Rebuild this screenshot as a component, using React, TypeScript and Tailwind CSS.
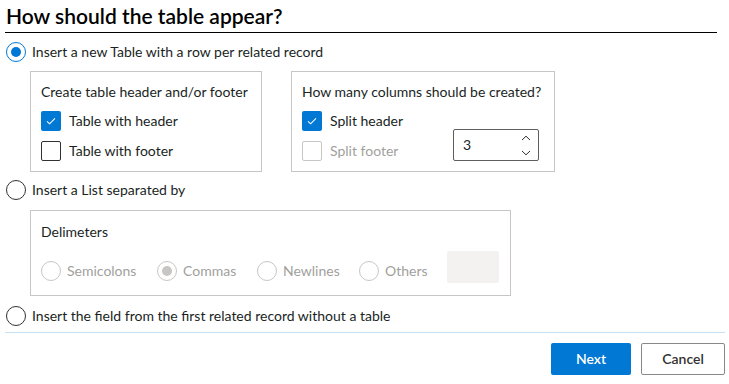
import React from 'react';

function Check({ checked, disabled, label }: { checked?: boolean; disabled?: boolean; label: string }) {
  return (
    <div className="flex items-center h-[20px]">
      {checked ? (
        <span className="w-[20px] h-[20px] rounded-[2px] bg-[#0078d4] flex items-center justify-center">
          <svg width="12" height="12" viewBox="0 0 12 12" fill="none">
            <path d="M2 6.3 L4.6 8.8 L10 3.4" stroke="#ffffff" strokeWidth="1.1" />
          </svg>
        </span>
      ) : (
        <span
          className={
            disabled
              ? 'w-[20px] h-[20px] rounded-[2px] border border-[#c8c6c4] bg-white'
              : 'w-[20px] h-[20px] rounded-[2px] border border-[#323130] bg-white'
          }
        />
      )}
      <span className={disabled ? 'ml-[8px] text-[#a19f9d] whitespace-nowrap' : 'ml-[8px] text-[#201f1e] whitespace-nowrap'}>{label}</span>
    </div>
  );
}

function Radio({ checked, disabled, label }: { checked?: boolean; disabled?: boolean; label: string }) {
  const ring = disabled ? 'border-[#c8c6c4]' : checked ? 'border-[#0078d4]' : 'border-[#323130]';
  return (
    <div className="flex items-center h-[20px]">
      <span className={`w-[20px] h-[20px] rounded-full border ${ring} bg-white flex items-center justify-center shrink-0`}>
        {checked && (
          <span className={disabled ? 'w-[10px] h-[10px] rounded-full bg-[#c8c6c4]' : 'w-[10px] h-[10px] rounded-full bg-[#0078d4]'} />
        )}
      </span>
      <span className={disabled ? 'ml-[6px] text-[#a19f9d] whitespace-nowrap' : 'ml-[6px] text-[#201f1e] whitespace-nowrap'}>{label}</span>
    </div>
  );
}

export default function App() {
  return (
    <div className="bg-white w-[729px] h-[384px] pl-[5px] text-[14px] leading-[20px] text-[#201f1e] font-['Segoe_UI','Lato',sans-serif]">
      <div className="w-[712px] h-[33px] border-b border-black">
        <h1 className="pl-[1px] pt-[1px] text-[21px] leading-[30px] font-semibold text-black">How should the table appear?</h1>
      </div>

      <div className="mt-[9px] pl-[1px]">
        <Radio checked label="Insert a new Table with a row per related record" />
      </div>

      <div className="mt-[9px] ml-[25px] flex gap-[29px]">
        <div className="w-[232px] h-[101px] border border-[#c8c6c4] pt-[10px] pl-[10px]">
          <div className="whitespace-nowrap">Create table header and/or footer</div>
          <div className="mt-[9px] flex flex-col gap-[10px]">
            <Check checked label="Table with header" />
            <Check label="Table with footer" />
          </div>
        </div>
        <div className="w-[264px] h-[101px] border border-[#c8c6c4] pt-[10px] pl-[10px]">
          <div className="whitespace-nowrap">How many columns should be created?</div>
          <div className="mt-[9px] flex">
            <div className="w-[151px] flex flex-col gap-[10px]">
              <Check checked label="Split header" />
              <Check disabled label="Split footer" />
            </div>
            <div className="mt-[18px] w-[86px] h-[32px] border border-[#605e5c] rounded-[2px] flex items-center justify-between pl-[9px] pr-[7px]">
              <span className="text-[#201f1e]">3</span>
              <div className="flex flex-col gap-[9px]">
                <svg width="10" height="6" viewBox="0 0 10 6" fill="none">
                  <path d="M1 5 L5 1.2 L9 5" stroke="#323130" strokeWidth="1" />
                </svg>
                <svg width="10" height="6" viewBox="0 0 10 6" fill="none">
                  <path d="M1 1 L5 4.8 L9 1" stroke="#323130" strokeWidth="1" />
                </svg>
              </div>
            </div>
          </div>
        </div>
      </div>

      <div className="mt-[8px] pl-[1px]">
        <Radio label="Insert a List separated by" />
      </div>

      <div className="mt-[10px] ml-[25px] w-[481px] h-[86px] border border-[#c8c6c4] pt-[11px] pl-[10px]">
        <div>Delimeters</div>
        <div className="mt-[9px] flex items-end">
          <div className="w-[116px] mb-[2px]">
            <Radio disabled label="Semicolons" />
          </div>
          <div className="w-[100px] mb-[2px]">
            <Radio disabled checked label="Commas" />
          </div>
          <div className="w-[102px] mb-[2px]">
            <Radio disabled label="Newlines" />
          </div>
          <div className="w-[88px] mb-[2px]">
            <Radio disabled label="Others" />
          </div>
          <div className="w-[52px] h-[32px] rounded-[2px] bg-[#f3f2f1]" />
        </div>
      </div>

      <div className="mt-[10px] pl-[1px]">
        <Radio label="Insert the field from the first related record without a table" />
      </div>

      <div className="mt-[6px] w-[720px] border-t border-[#c7e0f4] pt-[10px] flex justify-end gap-[10px]">
        <button className="w-[80px] h-[32px] rounded-[2px] bg-[#0078d4] text-white font-semibold">Next</button>
        <button className="w-[84px] h-[32px] rounded-[2px] border border-[#8a8886] bg-white text-[#323130] font-semibold">Cancel</button>
      </div>
    </div>
  );
}
